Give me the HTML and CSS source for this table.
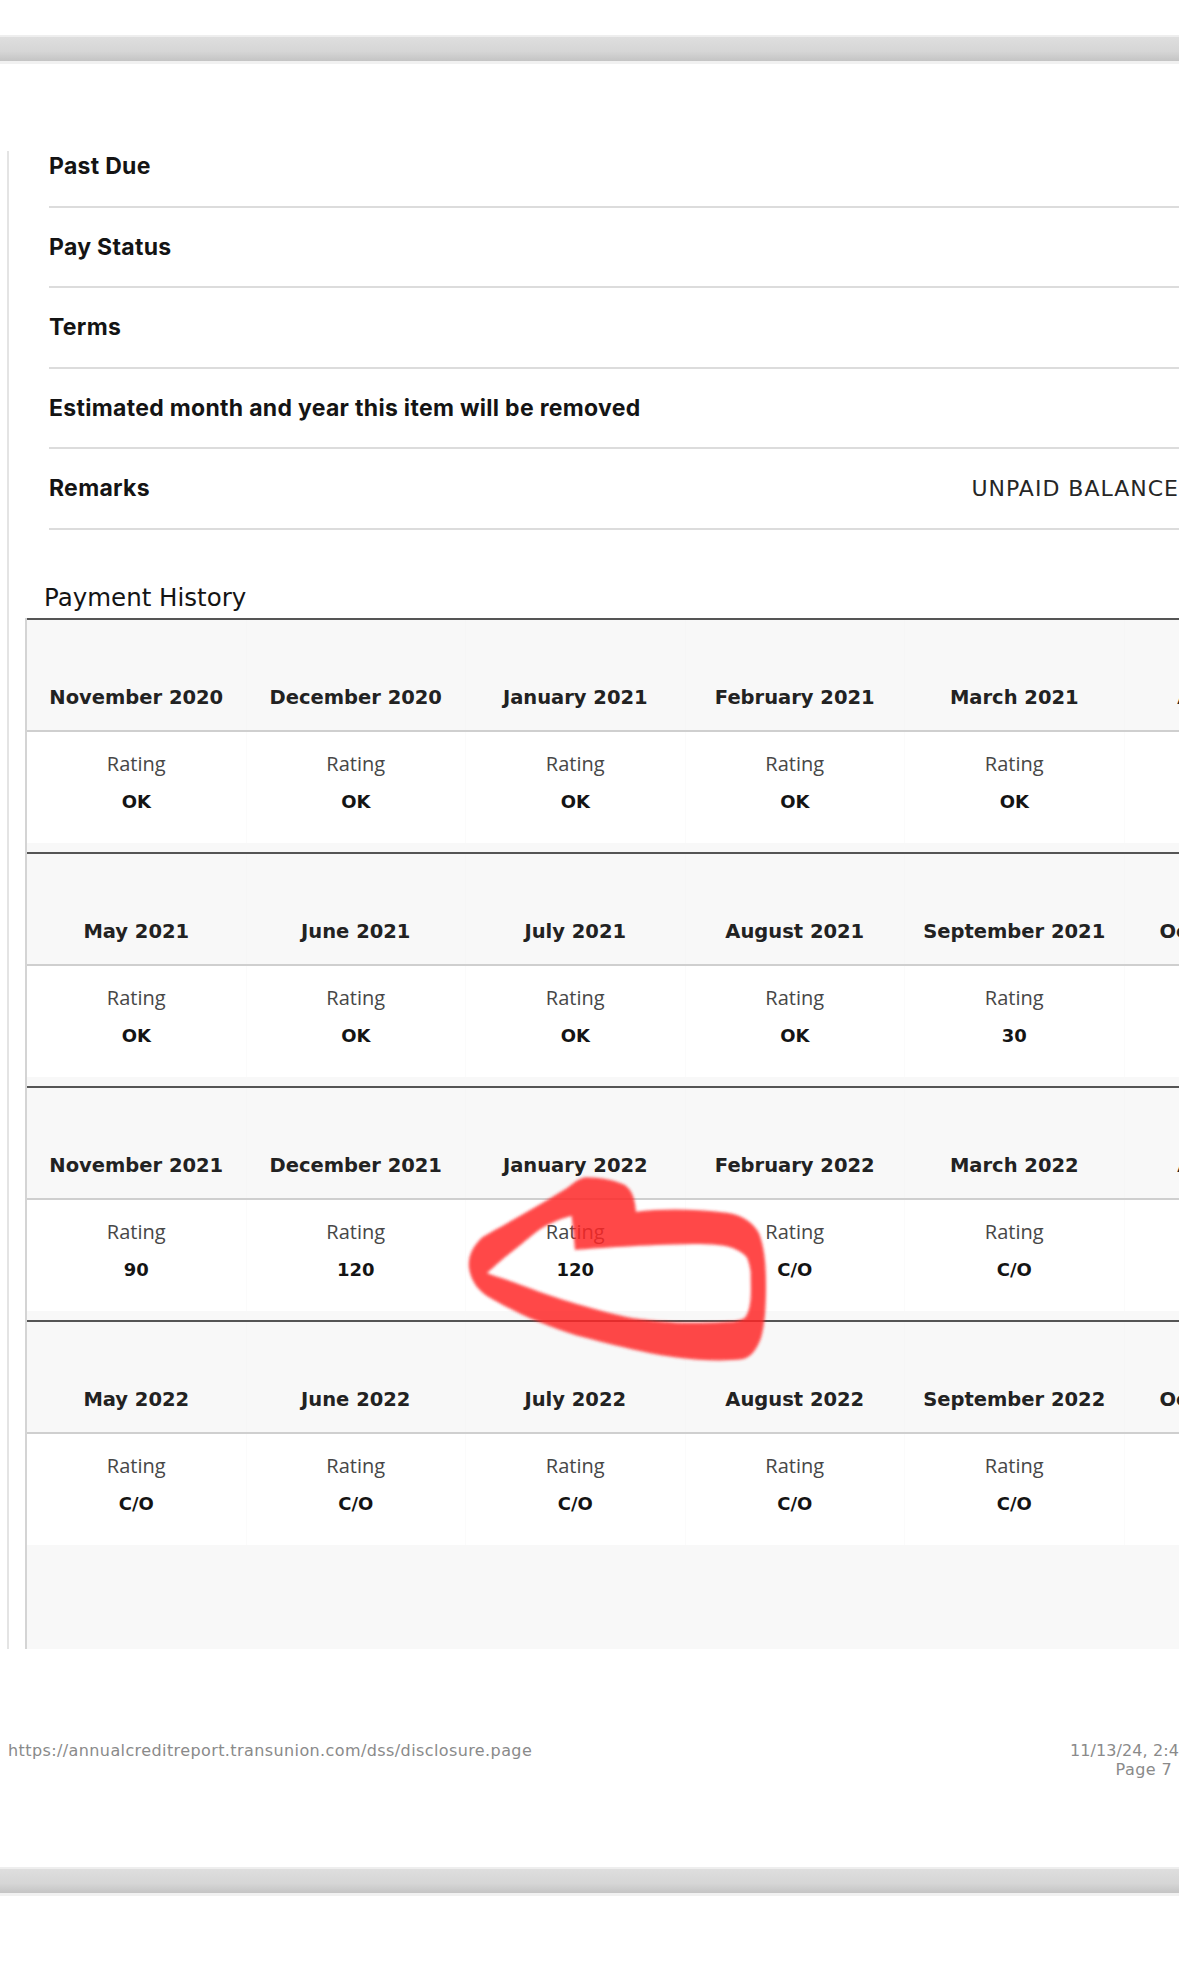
FILE: index.html
```html
<!DOCTYPE html>
<html lang="en">
<head>
<meta charset="utf-8">
<title>Payment History</title>
<link rel="stylesheet" href="styles.css">
</head>
<body>
<div class="page">
  <div class="bar bar-top"></div>

  <section class="report">
    <div class="details">
      <div class="detail-row"><span class="detail-label">Past Due</span><span class="detail-value"></span></div>
      <div class="detail-row"><span class="detail-label">Pay Status</span><span class="detail-value"></span></div>
      <div class="detail-row"><span class="detail-label">Terms</span><span class="detail-value"></span></div>
      <div class="detail-row"><span class="detail-label">Estimated month and year this item will be removed</span><span class="detail-value"></span></div>
      <div class="detail-row"><span class="detail-label">Remarks</span><span class="detail-value">UNPAID BALANCE</span></div>
    </div>

    <h2 class="history-title">Payment History</h2>

    <div class="history">
      <div class="group">
        <div class="months">
          <div class="month">November 2020</div><div class="month">December 2020</div><div class="month">January 2021</div><div class="month">February 2021</div><div class="month">March 2021</div><div class="month">April 2021</div>
        </div>
        <div class="ratings">
          <div class="rating"><span class="rating-label">Rating</span><span class="rating-value">OK</span></div>
          <div class="rating"><span class="rating-label">Rating</span><span class="rating-value">OK</span></div>
          <div class="rating"><span class="rating-label">Rating</span><span class="rating-value">OK</span></div>
          <div class="rating"><span class="rating-label">Rating</span><span class="rating-value">OK</span></div>
          <div class="rating"><span class="rating-label">Rating</span><span class="rating-value">OK</span></div>
          <div class="rating"></div>
        </div>
      </div>

      <div class="group">
        <div class="months">
          <div class="month">May 2021</div><div class="month">June 2021</div><div class="month">July 2021</div><div class="month">August 2021</div><div class="month">September 2021</div><div class="month">October 2021</div>
        </div>
        <div class="ratings">
          <div class="rating"><span class="rating-label">Rating</span><span class="rating-value">OK</span></div>
          <div class="rating"><span class="rating-label">Rating</span><span class="rating-value">OK</span></div>
          <div class="rating"><span class="rating-label">Rating</span><span class="rating-value">OK</span></div>
          <div class="rating"><span class="rating-label">Rating</span><span class="rating-value">OK</span></div>
          <div class="rating"><span class="rating-label">Rating</span><span class="rating-value">30</span></div>
          <div class="rating"></div>
        </div>
      </div>

      <div class="group">
        <div class="months">
          <div class="month">November 2021</div><div class="month">December 2021</div><div class="month">January 2022</div><div class="month">February 2022</div><div class="month">March 2022</div><div class="month">April 2022</div>
        </div>
        <div class="ratings">
          <div class="rating"><span class="rating-label">Rating</span><span class="rating-value">90</span></div>
          <div class="rating"><span class="rating-label">Rating</span><span class="rating-value">120</span></div>
          <div class="rating"><span class="rating-label">Rating</span><span class="rating-value">120</span></div>
          <div class="rating"><span class="rating-label">Rating</span><span class="rating-value">C/O</span></div>
          <div class="rating"><span class="rating-label">Rating</span><span class="rating-value">C/O</span></div>
          <div class="rating"></div>
        </div>
      </div>

      <div class="group group-last">
        <div class="months">
          <div class="month">May 2022</div><div class="month">June 2022</div><div class="month">July 2022</div><div class="month">August 2022</div><div class="month">September 2022</div><div class="month">October 2022</div>
        </div>
        <div class="ratings">
          <div class="rating"><span class="rating-label">Rating</span><span class="rating-value">C/O</span></div>
          <div class="rating"><span class="rating-label">Rating</span><span class="rating-value">C/O</span></div>
          <div class="rating"><span class="rating-label">Rating</span><span class="rating-value">C/O</span></div>
          <div class="rating"><span class="rating-label">Rating</span><span class="rating-value">C/O</span></div>
          <div class="rating"><span class="rating-label">Rating</span><span class="rating-value">C/O</span></div>
          <div class="rating"></div>
        </div>
      </div>
    </div>
  </section>

  <footer class="print-footer">
    <span class="footer-url">https://annualcreditreport.transunion.com/dss/disclosure.page</span>
    <span class="footer-meta"><span class="footer-date">11/13/24, 2:4</span><span class="footer-page">Page 7</span></span>
  </footer>

  <div class="bar bar-bottom"></div>

  <svg class="markup" width="1179" height="1978" viewBox="0 0 1179 1978" aria-hidden="true">
    <defs>
      <filter id="soft" x="-5%" y="-5%" width="110%" height="110%">
        <feGaussianBlur stdDeviation="1.5"/>
      </filter>
    </defs>
    <path class="markup-stroke" fill-rule="evenodd" filter="url(#soft)"
      d="M586.7,1177.3 C598,1177.5 612,1179 625,1185 C633,1191 635,1200 636,1211.7
         C660,1209 690,1208.5 726.7,1212.7 C742,1215 753,1222 759,1233.3
         C765.5,1250 766,1270 766,1287 C766,1305 765,1325 761,1338
         C757,1349 751,1357 743.3,1359 C725,1361.5 700,1360.5 676.7,1357.5
         C650,1354 620,1347 576.7,1335.5 C548,1327 518,1314 492,1299
         C479,1292 471,1282 469,1268 C468,1258 471,1248 482,1237.5
         C500,1227 530,1211 566.7,1188.3 C575,1182 580,1177.6 586.7,1177.3 Z
         M487,1273 C495,1266 505,1257 511,1252.5 C525,1242 535,1232 543.3,1227.3
         C555,1221 563,1218 571.7,1216 L575,1250
         C600,1248 640,1245 693.3,1244 C712,1244 726,1245 733.3,1248.3
         C742,1252 746,1256 747.3,1258.3 C750,1266 751,1272 750.7,1276.7
         C751,1290 751,1298 750,1303.3 C749,1311 747,1315 745,1317.5
         C740,1321 734,1321.5 726.7,1321.7 C705,1323 690,1323 676.7,1322.5
         C660,1321.5 640,1319.5 626.7,1317 C600,1311 580,1305 562,1299.5
         C542,1293 527,1287 513,1282 C502,1278 493,1275.5 487,1273 Z"/>
  </svg>
</div>
</body>
</html>
```

FILE: styles.css
```css
* {
  box-sizing: border-box;
}

html, body {
  margin: 0;
  padding: 0;
  background: #ffffff;
}

.page {
  position: relative;
  width: 1179px;
  height: 1978px;
  overflow: hidden;
  background: #ffffff;
  font-family: "Open Sans", "DejaVu Sans", sans-serif;
  color: #1a1a1a;
}

/* grey page-separator bars */
.bar {
  height: 29px;
  border-top: 2px solid #eeeeee;
  border-bottom: 3px solid #f1f1f1;
  background: linear-gradient(#dedede 0%, #d6d6d6 60%, #c4c4c4 100%);
}

.bar-top {
  margin-top: 35px;
}

.bar-bottom {
  margin-top: 88px;
}

/* report body with its faint left rule */
.report {
  margin-top: 63px;
  margin-left: 7px;
  padding-left: 2px;
  background: linear-gradient(#e4e4e4, #e4e4e4) no-repeat 0 24px / 2px calc(100% - 24px);
}

.details {
  margin-left: 40px;
  width: 1132px;
}

.detail-row {
  display: flex;
  align-items: center;
  justify-content: space-between;
  height: 80.5px;
  border-bottom: 2px solid #dcdcdc;
}

.detail-label {
  font-family: "Inter", "Liberation Sans", sans-serif;
  font-weight: 700;
  font-size: 23px;
  letter-spacing: 0.3px;
  color: #141414;
}

.detail-value {
  font-family: "DejaVu Sans", "Open Sans", sans-serif;
  font-weight: 400;
  font-size: 22px;
  letter-spacing: 1px;
  color: #262626;
  margin-right: 2px;
}

.history-title {
  margin: 55px 0 7px 35px;
  font-family: "DejaVu Sans", "Open Sans", sans-serif;
  font-weight: 400;
  font-size: 24.5px;
  line-height: 26px;
  color: #141414;
}

/* payment history grid */
.history {
  margin-left: 16px;
  width: 1319px;
  border-left: 2px solid #d4d4d4;
  background: #f8f8f8;
}

.group {
  border-top: 2px solid #555555;
  padding-bottom: 9.3px;
}

.group-last {
  padding-bottom: 104px;
}

.months {
  display: grid;
  grid-template-columns: repeat(6, 219.5px);
  height: 112px;
  border-bottom: 2px solid #cfcfcf;
}

.month {
  display: flex;
  align-items: flex-end;
  justify-content: center;
  padding-bottom: 20px;
  font-family: "DejaVu Sans", "Verdana", sans-serif;
  font-weight: 700;
  font-size: 19.5px;
  line-height: 24px;
  color: #222222;
  white-space: nowrap;
  border-right: 1px solid #f6f6f6;
}

.ratings {
  display: grid;
  grid-template-columns: repeat(6, 219.5px);
  height: 111px;
  background: #ffffff;
}

.rating {
  display: flex;
  flex-direction: column;
  align-items: center;
  padding-top: 18px;
  border-right: 1px solid #fbfbfb;
}

.rating-label {
  font-family: "Open Sans", "DejaVu Sans", sans-serif;
  font-size: 20px;
  line-height: 28px;
  color: #474747;
}

.rating-value {
  margin-top: 12px;
  font-family: "DejaVu Sans", "Verdana", sans-serif;
  font-weight: 700;
  font-size: 18px;
  line-height: 24px;
  color: #141414;
}

/* print footer */
.print-footer {
  display: flex;
  justify-content: space-between;
  align-items: flex-start;
  margin-top: 92px;
  padding-left: 8px;
  font-family: "DejaVu Sans", "Liberation Sans", sans-serif;
  font-size: 16px;
  line-height: 19px;
  letter-spacing: 0.4px;
  color: #8a8a8a;
}

.footer-meta {
  display: flex;
  flex-direction: column;
  align-items: flex-end;
  padding-right: 7px;
}

.footer-date {
  margin-right: -7px;
  white-space: nowrap;
  letter-spacing: 0.1px;
}

/* hand-drawn markup on top of the page */
.markup {
  position: absolute;
  top: 0;
  left: 0;
  pointer-events: none;
}

.markup-stroke {
  fill: rgb(255, 40, 40);
  opacity: 0.84;
}
```
